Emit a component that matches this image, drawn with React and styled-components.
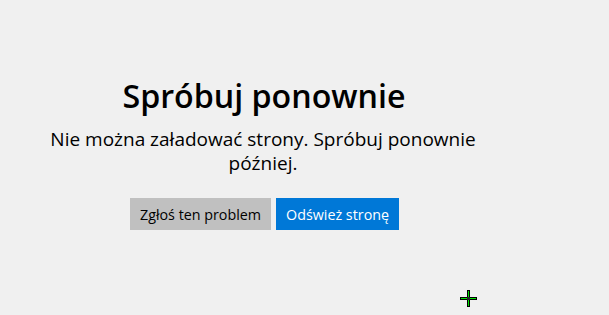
import React from "react";
import styled, { createGlobalStyle } from "styled-components";

const Global = createGlobalStyle`
  html, body { margin: 0; padding: 0; background: #f0f0f0; }
  body { font-family: "Open Sans", "Noto Sans", sans-serif; color: #000; }
`;

const Page = styled.div`
  position: relative;
  height: 315px;
  overflow: hidden;
  background: #f0f0f0;
  padding-top: 76px;
  box-sizing: border-box;
`;

const Panel = styled.div`
  width: 460px;
  margin-left: 33px;
  text-align: center;
  display: flex;
  flex-direction: column;
  align-items: center;
`;

const Title = styled.h1`
  margin: 0 0 0 2px;
  font-size: 32.2px;
  line-height: 40px;
  font-weight: 600;
`;

const Message = styled.p`
  margin: 11px 0 0;
  font-size: 19px;
  line-height: 24px;
  font-weight: 400;
`;

const Actions = styled.div`
  display: flex;
  gap: 5px;
  margin: 23px 0 0 3px;
`;

const Button = styled.button`
  height: 32px;
  padding: 0 10px;
  border: none;
  border-radius: 0;
  font-family: inherit;
  font-size: 14.3px;
  background: ${p => (p.$primary ? "#0078d7" : "#c0c0c0")};
  color: ${p => (p.$primary ? "#fff" : "#000")};
  cursor: default;
`;

const Cursor = styled.svg`
  position: absolute;
  left: 459px;
  top: 289px;
`;

export default function App() {
  return (
    <Page>
      <Global />
      <Panel>
        <Title>Spróbuj ponownie</Title>
        <Message>Nie można załadować strony. Spróbuj ponownie później.</Message>
        <Actions>
          <Button>Zgłoś ten problem</Button>
          <Button $primary>Odśwież stronę</Button>
        </Actions>
      </Panel>
      <Cursor width="19" height="19" viewBox="0 0 19 19">
        <path d="M9.5 1 V18 M1 9.5 H18" stroke="#000" strokeWidth="3" />
        <path d="M9.5 2 V17 M2 9.5 H17" stroke="#00e000" strokeWidth="1" />
        <rect x="8" y="8" width="3" height="3" fill="#222" />
      </Cursor>
    </Page>
  );
}
